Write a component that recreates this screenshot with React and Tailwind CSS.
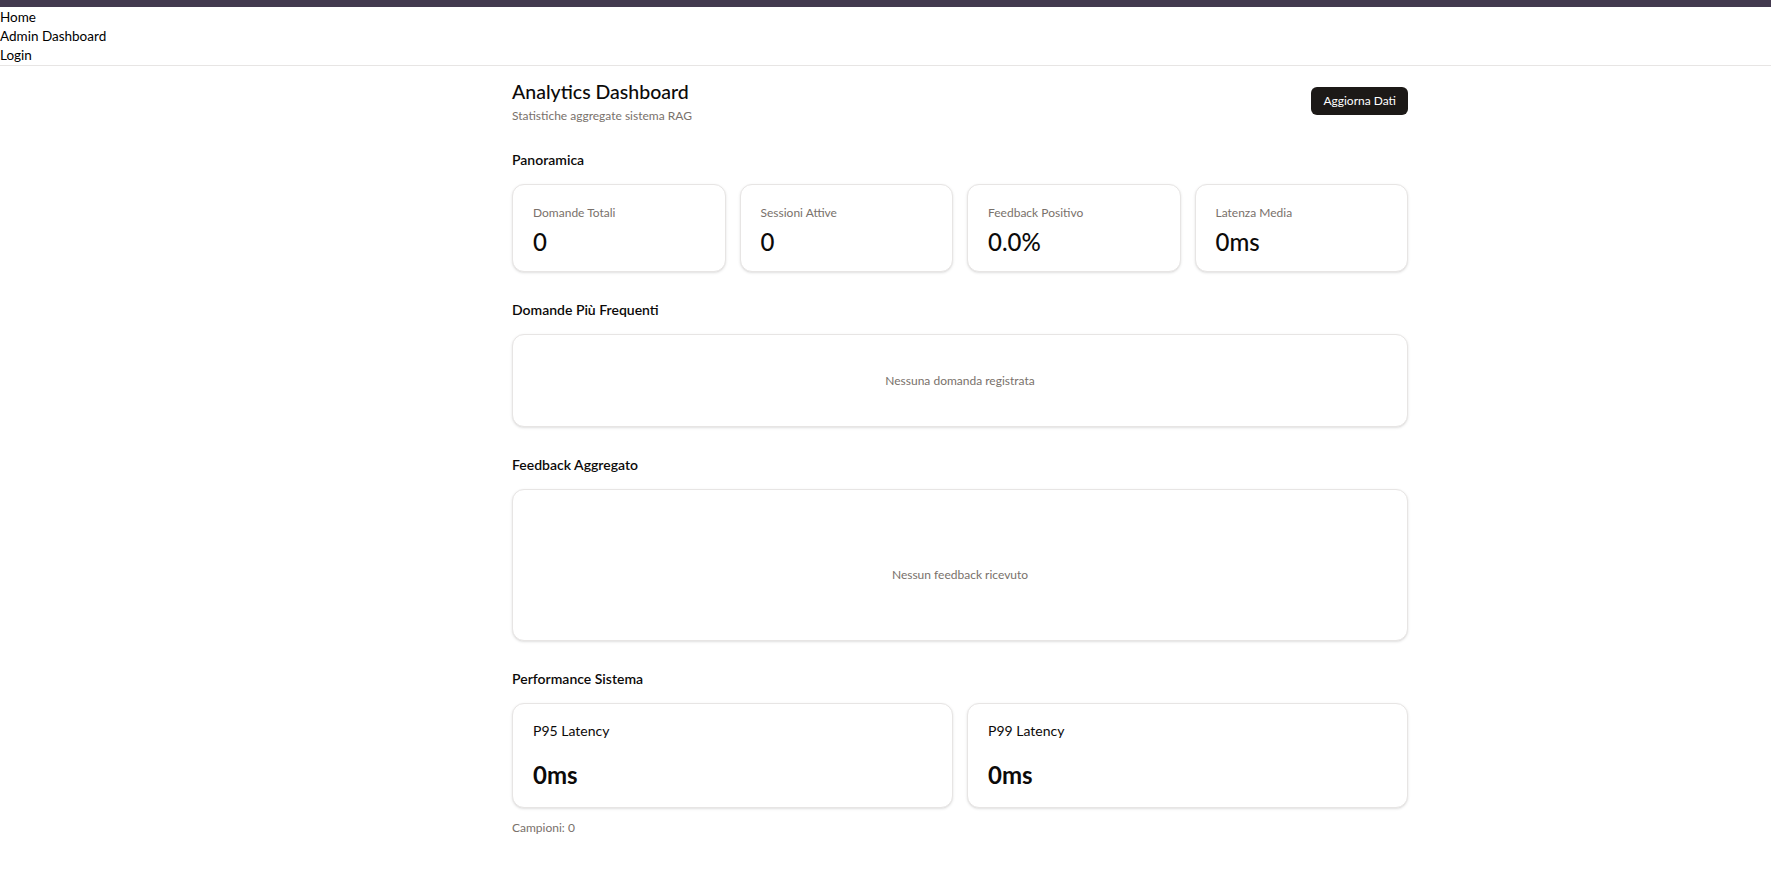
const stats = [
  { label: "Domande Totali", value: "0" },
  { label: "Sessioni Attive", value: "0" },
  { label: "Feedback Positivo", value: "0.0%" },
  { label: "Latenza Media", value: "0ms" },
];

const perf = [
  { label: "P95 Latency", value: "0ms" },
  { label: "P99 Latency", value: "0ms" },
];

const Card = ({ children, className = "" }) => (
  <div
    className={`rounded-xl border border-stone-200 bg-white shadow-sm ${className}`}
  >
    {children}
  </div>
);

const Section = ({ title, children }) => (
  <section>
    <h2 className="text-sm font-semibold text-stone-950 mb-3.5">{title}</h2>
    {children}
  </section>
);

export default function App() {
  return (
    <div
      className="min-h-screen bg-white text-stone-950"
      style={{ fontFamily: "Lato, 'Open Sans', sans-serif" }}
    >
      <div className="h-[7px] bg-[#433a4f]" />

      <nav className="border-b border-stone-200 pt-px text-[13.5px] leading-[19px] text-black">
        <div>Home</div>
        <div>Admin Dashboard</div>
        <div>Login</div>
      </nav>

      <main className="ml-[512px] w-[896px] pt-3 pb-10">
        <div className="flex items-center justify-between mb-[26px]">
          <div>
            <h1 className="text-[19.5px] leading-7 font-medium">Analytics Dashboard</h1>
            <p className="text-xs text-stone-500 mt-0.5">
              Statistiche aggregate sistema RAG
            </p>
          </div>
          <button className="h-7 rounded-md bg-[#1c1917] px-3 text-xs text-white">
            Aggiorna Dati
          </button>
        </div>

        <div className="flex flex-col gap-7">
          <Section title="Panoramica">
            <div className="grid grid-cols-4 gap-3.5">
              {stats.map((s) => (
                <Card key={s.label} className="px-5 pt-5 pb-[13px]">
                  <p className="text-xs text-stone-500">{s.label}</p>
                  <p className="text-2xl leading-8 font-medium mt-[5px]">{s.value}</p>
                </Card>
              ))}
            </div>
          </Section>

          <Section title="Domande Più Frequenti">
            <Card className="h-[93px] flex items-center justify-center">
              <p className="text-xs text-stone-500">Nessuna domanda registrata</p>
            </Card>
          </Section>

          <Section title="Feedback Aggregato">
            <Card className="h-[152px] pt-5 flex items-center justify-center">
              <p className="text-xs text-stone-500">Nessun feedback ricevuto</p>
            </Card>
          </Section>

          <Section title="Performance Sistema">
            <div className="grid grid-cols-2 gap-3.5">
              {perf.map((p) => (
                <Card key={p.label} className="px-5 pt-[17px] pb-4">
                  <p className="text-sm">{p.label}</p>
                  <p className="text-2xl leading-8 font-bold mt-[18px]">{p.value}</p>
                </Card>
              ))}
            </div>
            <p className="text-xs text-stone-500 mt-3">Campioni: 0</p>
          </Section>
        </div>
      </main>
    </div>
  );
}
